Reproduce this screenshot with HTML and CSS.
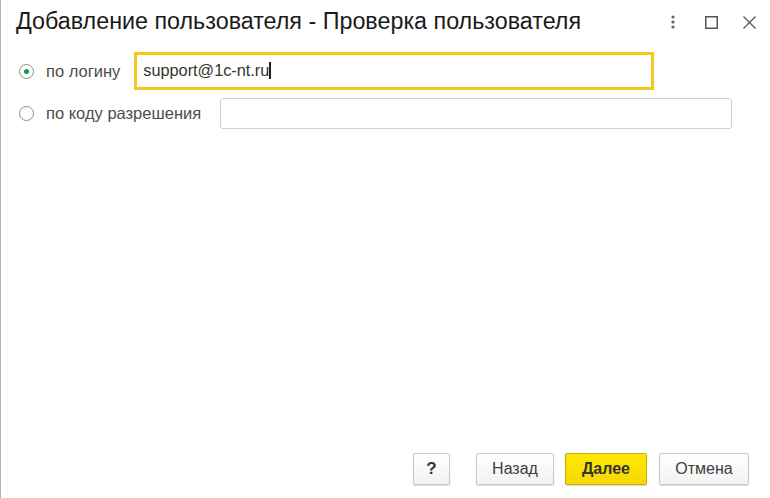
FILE: index.html
```html
<!DOCTYPE html>
<html lang="ru">
<head>
    <meta charset="UTF-8">
    <title>Добавление пользователя</title>
    <link rel="stylesheet" href="styles.css">
</head>
<body>
    <div class="window">
        <div class="title-bar">
            <h1>Добавление пользователя - Проверка пользователя</h1>
            <div class="title-icons">
                <span class="icon-more">
                    <svg width="4" height="14" viewBox="0 0 4 14"><circle cx="2" cy="2" r="1.6" fill="#666"/><circle cx="2" cy="7" r="1.6" fill="#666"/><circle cx="2" cy="12" r="1.6" fill="#666"/></svg>
                </span>
                <span class="icon-max">
                    <svg width="13" height="13" viewBox="0 0 13 13"><rect x="0.75" y="0.75" width="11.5" height="11.5" fill="none" stroke="#555" stroke-width="1.5"/></svg>
                </span>
                <span class="icon-close">
                    <svg width="13" height="13" viewBox="0 0 13 13"><path d="M0.5 0.5 L12.5 12.5 M12.5 0.5 L0.5 12.5" stroke="#555" stroke-width="1.2"/></svg>
                </span>
            </div>
        </div>

        <!-- Способ проверки -->
        <div class="form">
            <div class="row row-login">
                <span class="radio checked"></span>
                <span class="label">по логину</span>
                <div class="field focused">support@1c-nt.ru<span class="caret"></span></div>
            </div>
            <div class="row row-code">
                <span class="radio"></span>
                <span class="label">по коду разрешения</span>
                <div class="field"></div>
            </div>
        </div>

        <div class="footer">
            <button class="btn btn-help">?</button>
            <button class="btn btn-back">Назад</button>
            <button class="btn btn-next">Далее</button>
            <button class="btn btn-cancel">Отмена</button>
        </div>
    </div>
</body>
</html>
```

FILE: styles.css
```css
html, body {
    margin: 0;
    padding: 0;
    height: 100%;
    background: #fff;
}
body {
    font-family: Arial, "Liberation Sans", sans-serif;
    color: #333;
}
.window {
    height: 498px;
    box-sizing: border-box;
    border-left: 1px solid #b4b4b4;
    display: flex;
    flex-direction: column;
}
.title-bar {
    display: flex;
    align-items: center;
    height: 44px;
    padding: 0 14px 0 15px;
}
.title-bar h1 {
    flex: 1;
    margin: 0;
    font-size: 23.3px;
    font-weight: normal;
    color: #1a1a1a;
    padding-bottom: 1px;
}
.title-icons {
    display: flex;
    align-items: center;
}
.title-icons span {
    display: flex;
    align-items: center;
    justify-content: center;
}
.icon-more {
    width: 4px;
    margin-right: 30px;
}
.icon-max {
    margin-right: 25px;
}
.form {
    padding-left: 18px;
}
.row {
    display: flex;
    align-items: center;
}
.row-login {
    margin-top: 8px;
    height: 38px;
}
.row-code {
    margin-top: 8px;
    height: 31px;
}
.radio {
    width: 15px;
    height: 15px;
    border: 1px solid #8f8f8f;
    border-radius: 50%;
    box-sizing: border-box;
    position: relative;
    background: #fff;
}
.radio.checked::after {
    content: "";
    position: absolute;
    left: 4px;
    top: 4px;
    width: 5px;
    height: 5px;
    border-radius: 50%;
    background: #12994a;
}
.label {
    margin-left: 12px;
    font-size: 16.5px;
    color: #4d4d4d;
}
.field {
    box-sizing: border-box;
    background: #fff;
    font-size: 16.3px;
    color: #333;
    display: flex;
    align-items: center;
}
.row-login .field {
    margin-left: 14px;
    width: 520px;
    height: 38px;
    border: 3px solid #f5c71a;
    padding-left: 6px;
    padding-bottom: 2px;
}
.row-code .field {
    margin-left: 19px;
    width: 512px;
    height: 31px;
    border: 1px solid #cfcfcf;
    border-radius: 3px;
}
.caret {
    display: inline-block;
    width: 2px;
    height: 17px;
    background: #222;
}
.footer {
    margin-top: auto;
    display: flex;
    justify-content: flex-end;
    padding: 0 21px 13px 0;
}
.btn {
    height: 32px;
    box-sizing: border-box;
    border: 1px solid #c8c8c8;
    border-radius: 2px;
    background: linear-gradient(#ffffff, #f2f2f2);
    box-shadow: 0 1px 1px rgba(0, 0, 0, 0.15);
    font-family: Arial, "Liberation Sans", sans-serif;
    font-size: 16px;
    color: #404040;
    padding: 0;
    margin-left: 11px;
}
.btn-help {
    width: 37px;
    font-size: 17px;
    font-weight: bold;
    color: #333;
}
.btn-back {
    width: 78px;
    margin-left: 26px;
}
.btn-next {
    width: 82px;
    background: linear-gradient(#fde800, #f7d800);
    border-color: #c4ae00;
    font-weight: bold;
    color: #333;
}
.btn-cancel {
    width: 90px;
    margin-left: 12px;
}
```
